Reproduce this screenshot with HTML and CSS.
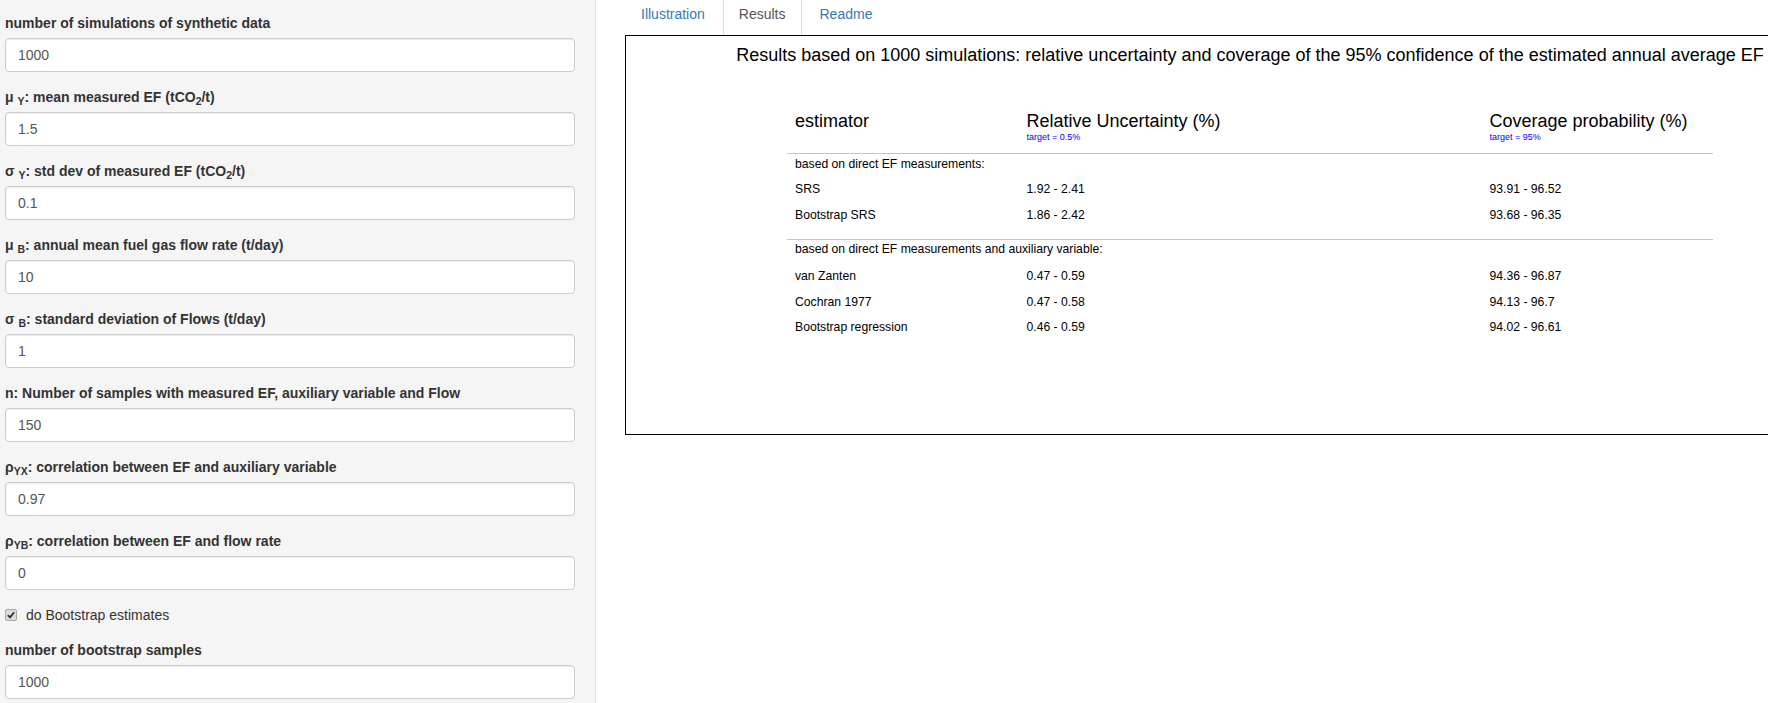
FILE: index.html
```html
<!DOCTYPE html>
<html>
<head>
<meta charset="utf-8">
<title>Simulation results</title>
<link rel="stylesheet" href="styles.css">
</head>
<body>
<div class="page">
  <aside class="sidebar">
    <div class="group">
      <label class="lbl">number of simulations of synthetic data</label>
      <input class="field" type="text" value="1000">
    </div>
    <div class="group">
      <label class="lbl">μ <sub>Y</sub>: mean measured EF (tCO<sub>2</sub>/t)</label>
      <input class="field" type="text" value="1.5">
    </div>
    <div class="group">
      <label class="lbl">σ <sub>Y</sub>: std dev of measured EF (tCO<sub>2</sub>/t)</label>
      <input class="field" type="text" value="0.1">
    </div>
    <div class="group">
      <label class="lbl">μ <sub>B</sub>: annual mean fuel gas flow rate (t/day)</label>
      <input class="field" type="text" value="10">
    </div>
    <div class="group">
      <label class="lbl">σ <sub>B</sub>: standard deviation of Flows (t/day)</label>
      <input class="field" type="text" value="1">
    </div>
    <div class="group">
      <label class="lbl">n: Number of samples with measured EF, auxiliary variable and Flow</label>
      <input class="field" type="text" value="150">
    </div>
    <div class="group">
      <label class="lbl">ρ<sub>YX</sub>: correlation between EF and auxiliary variable</label>
      <input class="field" type="text" value="0.97">
    </div>
    <div class="group">
      <label class="lbl">ρ<sub>YB</sub>: correlation between EF and flow rate</label>
      <input class="field" type="text" value="0">
    </div>
    <div class="check-group">
      <span class="check-box"><svg width="8" height="8" viewBox="0 0 8 8"><path d="M0.8 4.2 L3 6.4 L7.2 1.2" fill="none" stroke="#333" stroke-width="1.8"/></svg></span>
      <span class="check-text">do Bootstrap estimates</span>
    </div>
    <div class="group">
      <label class="lbl">number of bootstrap samples</label>
      <input class="field" type="text" value="1000">
    </div>
  </aside>
  <main class="main">
    <ul class="tabs">
      <li class="tab"><a>Illustration</a></li>
      <li class="tab active"><a>Results</a></li>
      <li class="tab"><a>Readme</a></li>
    </ul>
    <div class="result-box">
      <div class="title">Results based on 1000 simulations: relative uncertainty and coverage of the 95% confidence of the estimated annual average EF</div>
      <div class="rtable">
        <div class="rhead">
          <div class="c1"><div class="hname">estimator</div></div>
          <div class="c2"><div class="hname">Relative Uncertainty (%)</div><div class="target">target = 0.5%</div></div>
          <div class="c3"><div class="hname">Coverage probability (%)</div><div class="target">target = 95%</div></div>
        </div>
        <div class="section s1">
          <div class="subhead">based on direct EF measurements:</div>
          <div class="row"><div class="c1">SRS</div><div class="c2">1.92 - 2.41</div><div class="c3">93.91 - 96.52</div></div>
          <div class="row"><div class="c1">Bootstrap SRS</div><div class="c2">1.86 - 2.42</div><div class="c3">93.68 - 96.35</div></div>
        </div>
        <div class="section s2">
          <div class="subhead">based on direct EF measurements and auxiliary variable:</div>
          <div class="row"><div class="c1">van Zanten</div><div class="c2">0.47 - 0.59</div><div class="c3">94.36 - 96.87</div></div>
          <div class="row"><div class="c1">Cochran 1977</div><div class="c2">0.47 - 0.58</div><div class="c3">94.13 - 96.7</div></div>
          <div class="row"><div class="c1">Bootstrap regression</div><div class="c2">0.46 - 0.59</div><div class="c3">94.02 - 96.61</div></div>
        </div>
      </div>
    </div>
  </main>
</div>
</body>
</html>
```
FILE: styles.css
```css
html, body {
  margin: 0;
  padding: 0;
  height: 100%;
  overflow: hidden;
  background: #fff;
}
body {
  font-family: "Liberation Sans", Arial, Helvetica, sans-serif;
  font-size: 14px;
  line-height: 20px;
  color: #333;
}
.page {
  display: flex;
  min-height: 100vh;
}
.sidebar {
  box-sizing: border-box;
  flex: 0 0 596px;
  width: 596px;
  background: #f5f5f5;
  border-right: 1px solid #e3e3e3;
  padding: 13px 20px 0 5px;
}
.group {
  margin-bottom: 15px;
}
.lbl {
  display: block;
  font-weight: bold;
  font-size: 14px;
  line-height: 20px;
  margin-bottom: 5px;
  color: #333;
}
.lbl sub {
  font-size: 10.5px;
  line-height: 0;
  vertical-align: -3px;
}
.field {
  display: block;
  box-sizing: border-box;
  width: 100%;
  height: 34px;
  padding: 6px 12px;
  font-family: inherit;
  font-size: 14px;
  line-height: 20px;
  color: #555;
  background: #fff;
  border: 1px solid #ccc;
  border-radius: 4px;
  box-shadow: inset 0 1px 1px rgba(0,0,0,.075);
  outline: none;
}
.check-group {
  display: flex;
  align-items: center;
  height: 20px;
  margin-bottom: 15px;
}
.check-box {
  box-sizing: border-box;
  width: 12px;
  height: 12px;
  margin-right: 9px;
  border: 1px solid #a8a8a8;
  border-radius: 2px;
  background: #dcdcdc;
  display: flex;
  align-items: center;
  justify-content: center;
}
.check-box svg { display: block; }
.check-text {
  color: #333;
  font-size: 14px;
}
.main {
  flex: 1 1 auto;
  min-width: 0;
  overflow: hidden;
  padding-left: 29px;
}
.tabs {
  list-style: none;
  margin: 0;
  padding: 0;
  display: flex;
  height: 35px;
}
.tab {
  margin-right: 2px;
}
.tab a {
  display: block;
  box-sizing: border-box;
  height: 35px;
  padding: 4px 15px 0;
  line-height: 20px;
  color: #337ab7;
  border: 1px solid transparent;
  border-top: 0;
  border-bottom: 0;
}
.tab.active a {
  color: #555;
  background: #fff;
  border-left-color: #ddd;
  border-right-color: #ddd;
}
.result-box {
  box-sizing: border-box;
  width: 1250px;
  height: 400px;
  border: 1px solid #000;
  padding-top: 9px;
  color: #000;
}
.title {
  text-align: center;
  font-size: 18px;
  line-height: 20px;
  color: #000;
}
.rtable {
  width: 926px;
  margin: 46px auto 0;
}
.rhead {
  display: flex;
  padding-bottom: 10px;
  border-bottom: 1px solid #c4c4c4;
}
.rhead .hname {
  font-size: 18px;
  line-height: 20px;
}
.target {
  color: #0000ff;
  font-size: 9px;
  line-height: 11px;
  margin-top: 1px;
}
.c1 { width: 25%; box-sizing: border-box; padding-left: 8px; }
.c2 { width: 50%; box-sizing: border-box; padding-left: 8px; }
.c3 { width: 25%; box-sizing: border-box; padding-left: 8px; }
.section {
  font-size: 12.2px;
  line-height: 14px;
}
.s1 {
  padding-bottom: 12px;
  border-bottom: 1px solid #c4c4c4;
}
.subhead {
  padding: 3px 0 5px 8px;
}
.s2 .subhead {
  padding-top: 2px;
  padding-bottom: 7px;
}
.row {
  display: flex;
  padding: 6px 0 5.5px;
}
```
